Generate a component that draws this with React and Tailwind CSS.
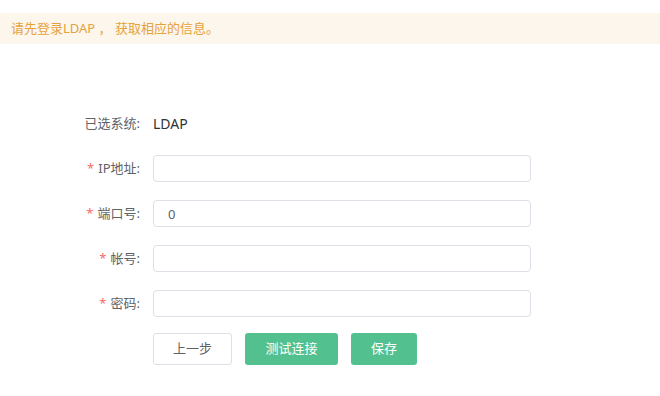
export default function App() {
  const font = { fontFamily: '"Noto Sans", "Noto Sans CJK SC", sans-serif' };
  const rows = [
    { label: "IP地址:", value: "" },
    { label: "端口号:", value: "0" },
    { label: "帐号:", value: "" },
    { label: "密码:", value: "" },
  ];

  return (
    <div className="w-[660px] h-[396px] bg-white overflow-hidden" style={font}>
      {/* notice bar */}
      <div className="mt-[13px] h-[31px] bg-[#fdf6ec] flex items-center pl-[11px] text-[13px] text-[#e6a23c]">
        请先登录LDAP ， 获取相应的信息。
      </div>

      {/* form */}
      <div className="pt-[66px] pl-[41px] flex flex-col gap-[18px]">
        <div className="flex items-center h-[27px]">
          <div className="w-[100px] pr-px text-right text-[13px] text-[#606266]">已选系统:</div>
          <div className="ml-[12px] text-[14px] text-[#303133]">LDAP</div>
        </div>

        {rows.map((r) => (
          <div key={r.label} className="flex items-center h-[27px]">
            <div className="w-[100px] pr-px text-right text-[13px] text-[#606266]">
              <span className="text-[#f56c6c] mr-[4px]">*</span>
              {r.label}
            </div>
            <input
              readOnly
              value={r.value}
              className="ml-[12px] w-[378px] h-[27px] border border-[#dcdfe6] rounded-[4px] px-[14px] text-[13px] text-[#606266] outline-none"
            />
          </div>
        ))}

        <div className="flex items-center gap-[13px] ml-[112px] -mt-[2px]">
          <button className="w-[79px] h-[32px] border border-[#dcdfe6] rounded-[3px] bg-white text-[13px] text-[#606266]">
            上一步
          </button>
          <button className="w-[93px] h-[32px] rounded-[3px] bg-[#52c18f] text-[13px] text-white">
            测试连接
          </button>
          <button className="w-[66px] h-[32px] rounded-[3px] bg-[#52c18f] text-[13px] text-white">
            保存
          </button>
        </div>
      </div>
    </div>
  );
}
